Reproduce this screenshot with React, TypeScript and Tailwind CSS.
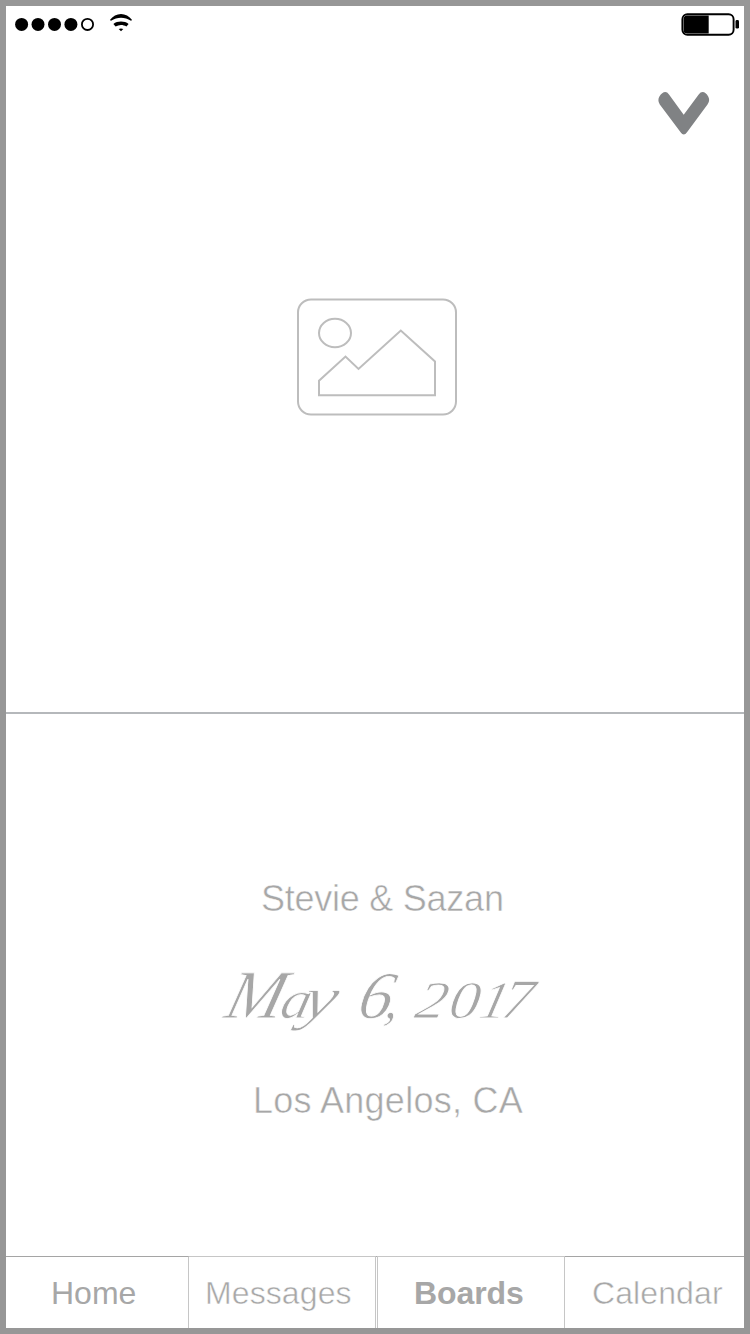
import React from "react";

function StatusBar() {
  return (
    <header className="flex h-9 shrink-0 items-center justify-between">
      <div className="flex items-center">
        <svg className="block h-9 w-[140px]" viewBox="0 0 140 36" aria-label="Signal and Wi-Fi">
          <g fill="#000">
            <circle cx="15.6" cy="18.4" r="6.5" />
            <circle cx="32" cy="18.4" r="6.5" />
            <circle cx="48.5" cy="18.4" r="6.5" />
            <circle cx="64.9" cy="18.4" r="6.5" />
          </g>
          <circle cx="81.5" cy="18.4" r="5.6" fill="none" stroke="#000" strokeWidth="1.8" />
          <path d="M103.9 14.1C109.6 6 120.4 6 126.1 14.1L125 14.8C118.6 10.6 111.4 10.6 105 14.8Z" fill="#000" />
          <path d="M107.4 18C111.5 14.8 118.5 14.8 122.6 18L120.4 20.5C117 18.5 113 18.5 109.6 20.5Z" fill="#000" />
          <path d="M112.7 23.1Q115 22 117.3 23.1L115 25.2Z" fill="#000" />
        </svg>
      </div>
      <svg className="block h-9 w-[64px]" viewBox="0 0 64 36" aria-label="Battery">
        <rect x="2.4" y="8.2" width="51.2" height="20.6" rx="5" fill="#fff" stroke="#000" strokeWidth="1.9" />
        <path d="M7 9.4H28.7V27.6H7Q3.6 27.6 3.6 24V13Q3.6 9.4 7 9.4Z" fill="#000" />
        <rect x="55.5" y="14" width="3.5" height="8.6" rx="1.4" fill="#000" />
      </svg>
    </header>
  );
}

function ChevronDown() {
  return (
    <svg className="block h-[45px] w-[54px]" viewBox="0 0 54 45">
      <path
        d="M2.8 14.6Q0.2 10.6 2.4 6.5Q5.1 2.2 8.3 2.1Q10.2 2.1 12 4.4L26.7 24.8L41.7 4.4Q43.5 2.1 45.6 2.1Q48.8 2.3 51.2 6.5Q53.4 10.4 50.5 14.4L30 42.2Q26.8 46.6 23.6 42.2Z"
        fill="#808284"
      />
    </svg>
  );
}

function ImagePlaceholder() {
  return (
    <svg className="block h-[120px] w-[162px]" viewBox="0 0 162 120" fill="none" stroke="#bdbdbd" strokeWidth="2">
      <rect x="2" y="2.5" width="158" height="115" rx="13" />
      <ellipse cx="39" cy="36" rx="16" ry="14.3" />
      <path d="M23 98.3V83.8L49.5 59.5L62.5 72L104.8 33.5L139 64.5V98.3Z" />
    </svg>
  );
}

const glyphs = [
  { text: "M", style: "w-[56px] text-[69px] -skew-x-[15deg]" },
  { text: "a", style: "w-[27px] text-[54px] scale-x-110 -skew-x-[12deg]" },
  { text: "y", style: "w-[50px] text-[60px] scale-x-125 -skew-x-[12deg]" },
  { text: "6", style: "w-[27px] text-[67px] -skew-x-[14deg]" },
  { text: ",", style: "w-[32px] text-[54px] -skew-x-[10deg]" },
  { text: "2", style: "w-[34px] text-[53px] scale-x-115 -skew-x-[12deg]" },
  { text: "0", style: "w-[28px] text-[53px] scale-x-115 -skew-x-[8deg]" },
  { text: "1", style: "w-[24px] text-[53px] -skew-x-[14deg]" },
  { text: "7", style: "w-[32px] text-[56px] scale-x-110 -skew-x-[10deg]" },
];

function EventDate() {
  return (
    <div className="flex h-20 items-baseline pl-[217px] font-['Liberation_Serif',serif] leading-[80px] text-[#a7a7a7] italic [-webkit-text-stroke:0.8px_white]">
      {glyphs.map((g, i) => (
        <span key={i} className={`block origin-[50%_75%] ${g.style}`}>
          {g.text}
        </span>
      ))}
    </div>
  );
}

export default function App() {
  return (
    <div className="flex h-[1334px] w-[750px] flex-col overflow-hidden border-6 border-[#979797] bg-white font-['Liberation_Sans',sans-serif] text-[#a7a7a7]">
      <StatusBar />
      <section className="flex h-[672px] shrink-0 flex-col border-b-2 border-[#b5b8bb]">
        <div className="flex justify-end pt-[48px] pr-[33px]">
          <ChevronDown />
        </div>
        <div className="pt-[162px] pl-[290px]">
          <ImagePlaceholder />
        </div>
      </section>
      <section className="flex h-[542px] shrink-0 flex-col pt-[165px] text-[36px] leading-10 whitespace-nowrap">
        <p className="pl-[255px] tracking-[-0.25px] [-webkit-text-stroke:0.5px_white]">Stevie &amp; Sazan</p>
        <div className="pt-[36px]">
          <EventDate />
        </div>
        <p className="pt-[46px] pl-[247px] tracking-[0.25px] [-webkit-text-stroke:0.5px_white]">Los Angelos, CA</p>
      </section>
      <nav className="flex h-[72px] shrink-0 text-[32px] leading-9 whitespace-nowrap">
        <div className="w-[183px] border-t border-r border-[#c6c6c6] border-t-[#a5a5a5] pt-[18px] pl-[45px]">Home</div>
        <div className="w-[187px] border-t border-r border-[#c6c6c6] pt-[18px] pl-[16px] tracking-[0.1px] [-webkit-text-stroke:0.5px_white]">Messages</div>
        <div className="w-px border-t border-[#aaa]" />
        <div className="w-[188px] border-x border-t border-[#c6c6c6] pt-[18px] pl-[36px] font-bold tracking-[-0.1px]">Boards</div>
        <div className="flex-1 border-t border-[#a5a5a5] pt-[18px] pl-[27px] tracking-[0.1px] [-webkit-text-stroke:0.5px_white]">Calendar</div>
      </nav>
    </div>
  );
}
